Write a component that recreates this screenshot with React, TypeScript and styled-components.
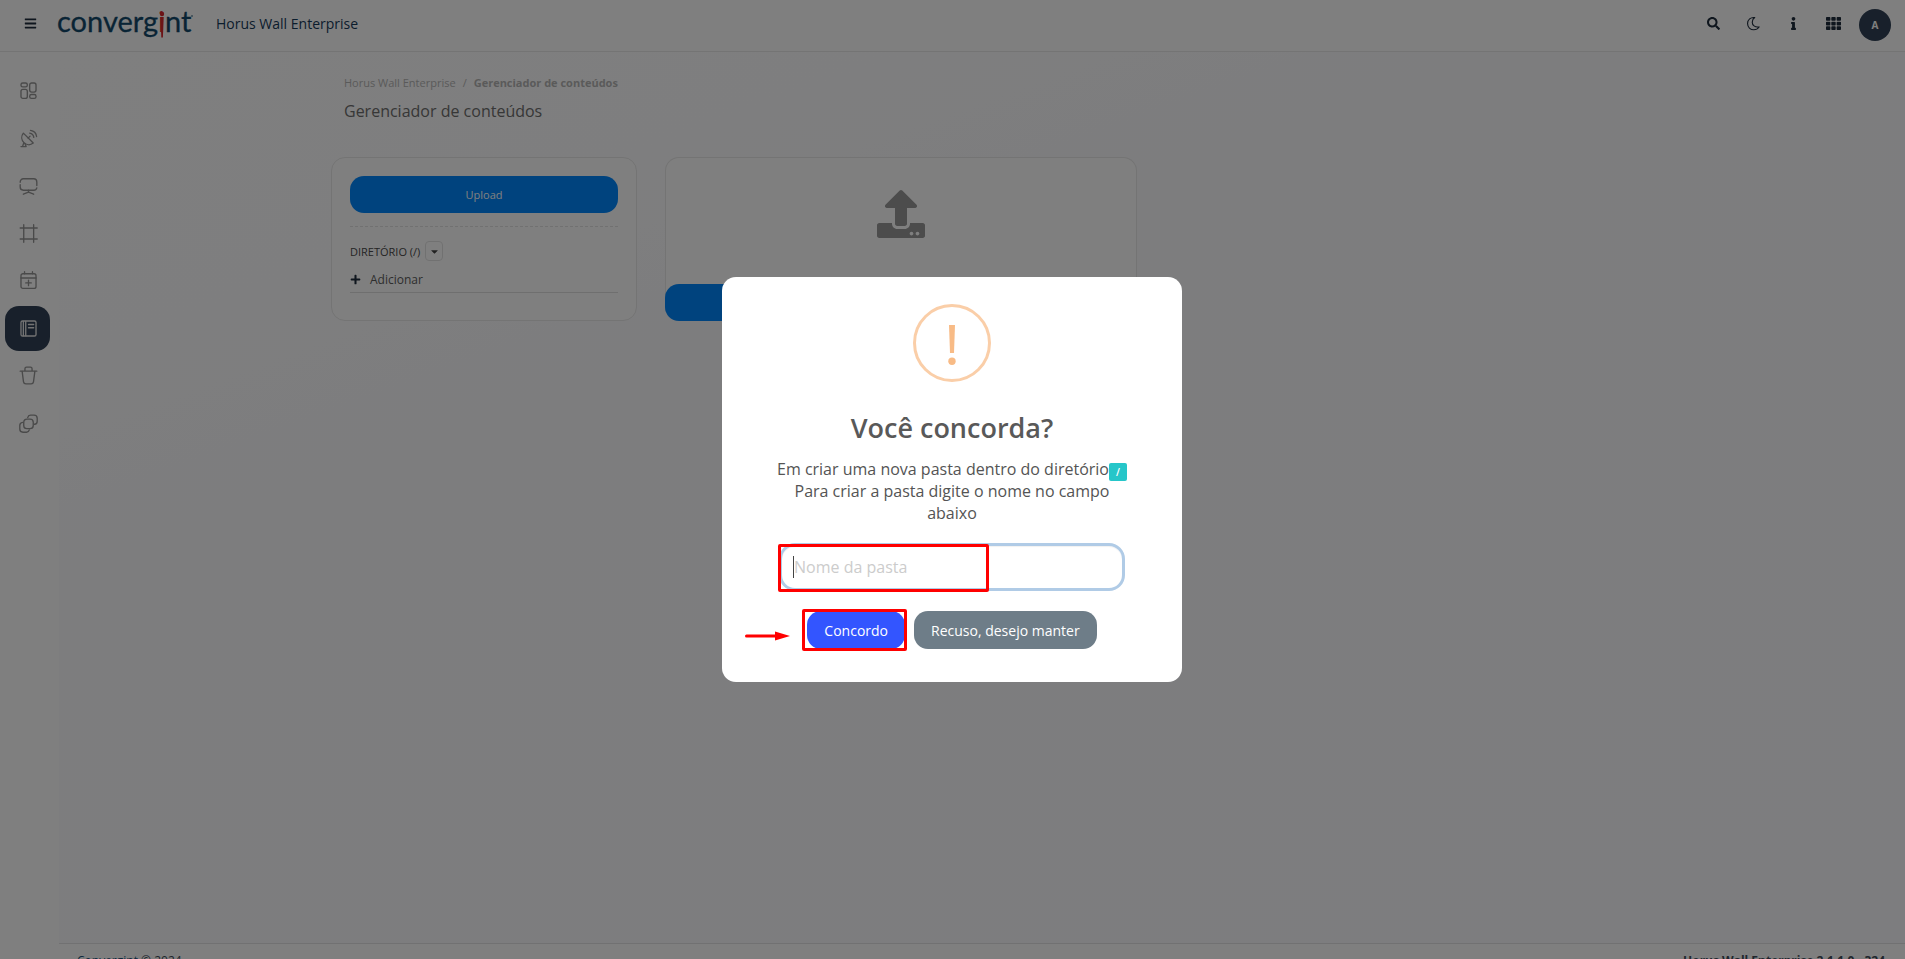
import React from "react";
import styled, { createGlobalStyle } from "styled-components";
import { FaBars, FaSearch, FaInfo, FaTh, FaUpload, FaCaretDown, FaPlus } from "react-icons/fa";

const GlobalStyle = createGlobalStyle`
  *, *::before, *::after { box-sizing: border-box; }
  body {
    margin: 0;
    overflow: hidden;
    font-family: "Open Sans", "Noto Sans", sans-serif;
    font-size: 12px;
    color: #444;
    background: #fff;
  }
  button, input { font-family: inherit; }
  a { color: inherit; text-decoration: none; }
  h1, h2, p, ol, ul { margin: 0; padding: 0; }
`;

const Header = styled.header`
  display: flex;
  align-items: center;
  height: 52px;
  padding: 0 14px 4px 20px;
  border-bottom: 1px solid #e9e9e9;
  color: #1d2d3d;
`;

const IconButton = styled.button`
  display: flex;
  align-items: center;
  justify-content: center;
  width: 20px;
  height: 32px;
  padding: 0;
  border: 0;
  background: none;
  color: #1f2d3d;
`;

const LogoLink = styled.a`
  display: flex;
  margin-left: 18px;
`;

const ProductName = styled.span`
  margin-left: 23px;
  font-size: 14px;
  font-weight: 500;
  color: #173a5a;
`;

const HeaderActions = styled.div`
  display: flex;
  align-items: center;
  gap: 20px;
  margin-left: auto;
`;

const Avatar = styled.button`
  width: 32px;
  height: 32px;
  padding: 0;
  margin: 2px 0 0 -4px;
  border: 0;
  border-radius: 50%;
  background: #304156;
  color: #fff;
  font-size: 10px;
  font-weight: 700;
`;

const Body = styled.div`
  display: flex;
  min-height: calc(100vh - 52px);
`;

const Sidebar = styled.nav`
  flex: none;
  width: 59px;
  padding: 16px 5px;
`;

const SideList = styled.ul`
  display: grid;
  grid-auto-rows: 1fr;
  height: 380px;
  list-style: none;
`;

const SideLink = styled.a<{ $active?: boolean }>`
  display: flex;
  align-items: center;
  justify-content: center;
  width: 45px;
  height: 45px;
  padding-left: 2px;
  border-radius: 14px;
  color: ${(p) => (p.$active ? "#e6e6e6" : "#949494")};
  background: ${(p) => (p.$active ? "#304156" : "transparent")};
`;

const Column = styled.div`
  display: flex;
  flex-direction: column;
  flex: 1;
`;

const Main = styled.main`
  min-height: calc(100vh - 68px);
  background: linear-gradient(160deg, #fefefe 0%, #fdfdfe 20%, #fafafd 34%, #fafafe 100%);
`;

const Container = styled.div`
  max-width: 1320px;
  margin: 0 auto;
  padding: 22px 9px;
`;

const PageHead = styled.div`
  padding: 0 13px;
`;

const Breadcrumb = styled.ol`
  display: flex;
  gap: 7px;
  list-style: none;
  font-size: 11px;
  line-height: 18px;
  color: #b5b5b5;
`;

const Crumb = styled.li<{ $current?: boolean }>`
  font-weight: ${(p) => (p.$current ? 700 : 400)};
`;

const PageTitle = styled.h1`
  margin-top: 6px;
  font-size: 16px;
  font-weight: 400;
  line-height: 26px;
  color: #6e6e6e;
`;

const CardRow = styled.div`
  display: flex;
  align-items: stretch;
  gap: 28px;
  margin-top: 33px;
`;

const Card = styled.section<{ $width: number }>`
  display: flex;
  flex-direction: column;
  width: ${(p) => p.$width}px;
  min-height: 164px;
  border: 1px solid #e8e8e8;
  border-radius: 14px;
  background: #fff;
`;

const DirectoryCard = styled(Card)`
  padding: 18px;
`;

const DropCard = styled(Card)`
  align-items: center;
  justify-content: space-between;
  border-bottom: 0;
  padding-top: 32px;
  color: #999;
`;

const PrimaryButton = styled.button`
  width: 100%;
  height: 37px;
  flex: none;
  border: 0;
  border-radius: 14px;
  background: #0087fc;
  color: #fff;
  font-size: 11px;
`;

const SendBar = styled(PrimaryButton)`
  width: calc(100% + 2px);
`;

const DirectoryRow = styled.div`
  display: flex;
  align-items: center;
  gap: 5px;
  margin-top: 13px;
  padding-top: 14px;
  border-top: 1px dashed #e3e3e3;
  font-size: 11px;
  color: #4a4a4a;
`;

const CaretButton = styled.button`
  display: flex;
  align-items: center;
  justify-content: center;
  width: 18px;
  height: 20px;
  padding: 0;
  border: 1px solid #e3e3e3;
  border-radius: 4px;
  background: none;
  color: #444;
`;

const AddButton = styled.button`
  display: flex;
  align-items: center;
  gap: 9px;
  width: 100%;
  margin-top: 7px;
  padding: 0 0 2px;
  height: 25px;
  border: 0;
  border-bottom: 1px solid #dedede;
  background: none;
  color: #5c5c5c;
  font-size: 12px;
  svg { color: #1f2d3d; }
`;

const Footer = styled.footer`
  display: flex;
  justify-content: space-between;
  padding: 8px 20px 12px 18px;
  border-top: 1px solid #e2e2e4;
  font-size: 12px;
  line-height: 18px;
  color: #3e4b59;
`;

const FooterBrand = styled.a`
  color: #17507a;
`;

const Backdrop = styled.div`
  position: fixed;
  inset: 0;
  display: flex;
  align-items: center;
  justify-content: center;
  padding-right: 1px;
  background: rgba(0, 0, 0, 0.5);
`;

const Dialog = styled.form`
  position: relative;
  width: 460px;
  padding: 27px 20px 33px;
  border-radius: 14px;
  background: #fff;
  display: flex;
  flex-direction: column;
  align-items: center;
  color: #545454;
`;

const DialogTitle = styled.h2`
  margin-top: 27px;
  font-size: 27px;
  font-weight: 600;
  line-height: 38px;
  color: #595959;
`;

const DialogText = styled.p`
  margin-top: 11px;
  font-size: 16px;
  line-height: 22px;
  text-align: center;
`;

const FirstLine = styled.span`
  display: flex;
  justify-content: center;
  height: 22px;
`;

const PathBadge = styled.span`
  width: 18px;
  height: 18px;
  margin-top: 5px;
  border-radius: 2px;
  background: #26c6c9;
  color: #fff;
  font-size: 10px;
  font-weight: 600;
  line-height: 18px;
`;

const FieldWrap = styled.div`
  position: relative;
  margin-top: 19px;
`;

const FolderInput = styled.input`
  display: block;
  width: 346px;
  height: 48px;
  padding: 0 12px;
  border: 3px solid #b0cbe6;
  border-radius: 16px;
  box-shadow: inset 0 1px 1px rgba(0, 0, 0, 0.06);
  background: #fff;
  font-size: 16px;
  color: #545454;
  outline: 0;
  &::placeholder { color: #ccc; opacity: 1; }
`;

const Caret = styled.span`
  position: absolute;
  left: 14px;
  top: 13px;
  width: 1px;
  height: 22px;
  background: #444;
`;

const Highlight = styled.span`
  position: absolute;
  border: 3px solid #f00;
  border-radius: 2px;
  pointer-events: none;
`;

const FieldHighlight = styled(Highlight)`
  left: -1px;
  top: 1px;
  width: 211px;
  height: 48px;
`;

const ButtonHighlight = styled(Highlight)`
  inset: -2px -2px -2px -5px;
`;

const DialogActions = styled.div`
  display: flex;
  gap: 9px;
  margin-top: 20px;
`;

const ActionWrap = styled.div`
  position: relative;
`;

const DialogButton = styled.button<{ $tone: string }>`
  height: 38px;
  padding: 0 17px;
  border: 0;
  border-radius: 14px;
  background: ${(p) => p.$tone};
  color: #fff;
  font-size: 14px;
  font-weight: 500;
`;

const Pointer = styled.svg`
  position: absolute;
  right: calc(100% + 17px);
  top: 20px;
`;

const LogoMark = styled.svg`
  overflow: visible;
`;

const Logo = () => (
  <LogoMark width="135" height="32" viewBox="0 0 135 32" role="img" aria-label="convergint">
    <g fontFamily="Lato, sans-serif" fontSize="29" fill="#12486a" stroke="#12486a" strokeWidth=".3">
      <text x="-1" y="24">converg<tspan fill="#d8282f" stroke="none">i</tspan>nt</text>
    </g>
    <path d="M102.500 9h3.200l-.8 20.500h-1.600z" fill="#d8282f" />
    <circle cx="104" cy="6" r="2.200" fill="#d8282f" />
    <circle cx="134" cy="8" r=".8" fill="#12486a" />
  </LogoMark>
);

const Glyph = ({ children, size = 19, width = 1.7 }: { children: React.ReactNode; size?: number; width?: number }) => (
  <svg width={size} height={size} viewBox="0 0 24 24" fill="none" stroke="currentColor" strokeWidth={width} strokeLinecap="round" strokeLinejoin="round" aria-hidden="true">
    {children}
  </svg>
);

const sideItems = [
  { label: "Painel", icon: <><rect x="2.500" y="2.500" width="8" height="5" rx="2.200" /><rect x="2.500" y="10.500" width="8" height="11.500" rx="2.500" /><rect x="13.500" y="2.500" width="8" height="11.500" rx="2.500" /><rect x="13.500" y="17" width="8" height="5" rx="2.200" /></> },
  { label: "Transmissão", icon: <><path d="M5.500 5.200C2.500 9 3 14 6.200 17.200s8 3.600 11.800.6z" /><path d="M11.500 11.500l2.500-2.500" /><path d="M13.500 5.200c2.600.4 4.800 2.500 5.200 5.300M14.500 1.800c3.900.6 7.200 3.800 7.700 7.700" /><path d="M6 17.500L4.500 22M2.500 22.200h6.500l-1.500-3.800" /></> },
  { label: "Telas", icon: <><path d="M1.500 8v-.5a4 4 0 0 1 4-4h13a4 4 0 0 1 4 4V12M1.500 11v3a4 4 0 0 0 4 4h13a4 4 0 0 0 4-3" /><path d="M12 18v2.500M5.500 23l6.500-2.500L18.500 23" /></> },
  { label: "Quadros", icon: <path d="M6 1v22M18.500 1v22M1.500 5h21.500M1.500 19h21.500" /> },
  { label: "Agenda", icon: <><rect x="2.500" y="3.500" width="19" height="18.500" rx="2.500" /><path d="M2.500 8.800h19M7 1v2.500M17 1v2.500M12 11.500v7M8.500 15h7" /></> },
  { label: "Conteúdos", active: true, icon: <><rect x="2.500" y="2.500" width="19" height="19" rx="2" /><path d="M5.500 3v18M8.500 3v18M12 7h6.500M12 11h6.500" /></> },
  { label: "Lixeira", icon: <><path d="M1.500 6.500h21M7.500 6V3.500a2 2 0 0 1 2-2h5a2 2 0 0 1 2 2V6" /><path d="M4 7l1.700 13a3 3 0 0 0 3 2.500h6.600a3 3 0 0 0 3-2.500L20 7" /></> },
  { label: "Camadas", icon: <><rect x="6" y="6.500" width="12" height="12" rx="4" /><path d="M11 4.500a4 4 0 0 1 3.500-3H19a4 4 0 0 1 4 4V9a4 4 0 0 1-3.500 4M4.500 10.500A4 4 0 0 0 1 14.500v4.500a4 4 0 0 0 4 4h4.500a4 4 0 0 0 3.500-3" /></> },
];

export default function App() {
  return (
    <>
      <GlobalStyle />
      <Header>
        <IconButton aria-label="Menu"><FaBars size={13} /></IconButton>
        <LogoLink href="#"><Logo /></LogoLink>
        <ProductName>Horus Wall Enterprise</ProductName>
        <HeaderActions>
          <IconButton aria-label="Buscar"><FaSearch size={13} /></IconButton>
          <IconButton aria-label="Modo escuro">
            <Glyph size={15} width={1.8}><path d="M14 2.500C7.500 1.500 2.500 6 2.500 12s4.500 10 10 10c3.500 0 6.500-1.500 8.500-4.500-7 1-11-3-11-7.500 0-3.500 1.500-6 4-7.500z" /></Glyph>
          </IconButton>
          <IconButton aria-label="Informações"><FaInfo size={13} /></IconButton>
          <IconButton aria-label="Aplicativos"><FaTh size={15} /></IconButton>
          <Avatar>A</Avatar>
        </HeaderActions>
      </Header>
      <Body>
        <Sidebar>
          <SideList>
            {sideItems.map((item) => (
              <li key={item.label}>
                <SideLink href="#" $active={item.active} aria-label={item.label}><Glyph>{item.icon}</Glyph></SideLink>
              </li>
            ))}
          </SideList>
        </Sidebar>
        <Column>
          <Main>
            <Container>
              <PageHead>
                <Breadcrumb>
                  <Crumb><a href="#">Horus Wall Enterprise</a></Crumb>
                  <li aria-hidden="true">/</li>
                  <Crumb $current>Gerenciador de conteúdos</Crumb>
                </Breadcrumb>
                <PageTitle>Gerenciador de conteúdos</PageTitle>
              </PageHead>
              <CardRow>
                <DirectoryCard $width={306}>
                  <PrimaryButton>Upload</PrimaryButton>
                  <DirectoryRow>
                    <span>DIRETÓRIO (/)</span>
                    <CaretButton aria-label="Escolher diretório"><FaCaretDown size={11} /></CaretButton>
                  </DirectoryRow>
                  <AddButton><FaPlus size={11} />Adicionar</AddButton>
                </DirectoryCard>
                <DropCard $width={472}>
                  <FaUpload size={48} />
                  <SendBar aria-label="Enviar" />
                </DropCard>
              </CardRow>
            </Container>
          </Main>
          <Footer>
            <span><FooterBrand href="#">Convergint</FooterBrand> © 2024</span>
            <strong>Horus Wall Enterprise 2.1.1.0 - 324</strong>
          </Footer>
        </Column>
      </Body>
      <Backdrop>
        <Dialog role="dialog" aria-labelledby="dialog-title">
          <svg width="78" height="78" viewBox="0 0 78 78" aria-hidden="true">
            <circle cx="39" cy="39" r="37.500" fill="none" stroke="#facea8" strokeWidth="3" />
            <path d="M36 21h6l-1 28h-4z" fill="#f8bb86" />
            <circle cx="39" cy="57.300" r="3.700" fill="#f8bb86" />
          </svg>
          <DialogTitle id="dialog-title">Você concorda?</DialogTitle>
          <DialogText>
            <FirstLine>Em criar uma nova pasta dentro do diretório<PathBadge>/</PathBadge></FirstLine>
            Para criar a pasta digite o nome no campo<br />abaixo
          </DialogText>
          <FieldWrap>
            <FolderInput aria-label="Nome da pasta" placeholder="Nome da pasta" />
            <Caret />
            <FieldHighlight />
          </FieldWrap>
          <DialogActions>
            <ActionWrap>
              <DialogButton type="button" $tone="#3355ff">Concordo</DialogButton>
              <ButtonHighlight />
              <Pointer width="45" height="10" viewBox="0 0 45 10" aria-hidden="true">
                <path d="M1.500 5H32" stroke="#f00" strokeWidth="3" strokeLinecap="round" />
                <path d="M30 .5L45 5 30 9.500z" fill="#f00" />
              </Pointer>
            </ActionWrap>
            <DialogButton type="button" $tone="#6e7d88">Recuso, desejo manter</DialogButton>
          </DialogActions>
        </Dialog>
      </Backdrop>
    </>
  );
}
